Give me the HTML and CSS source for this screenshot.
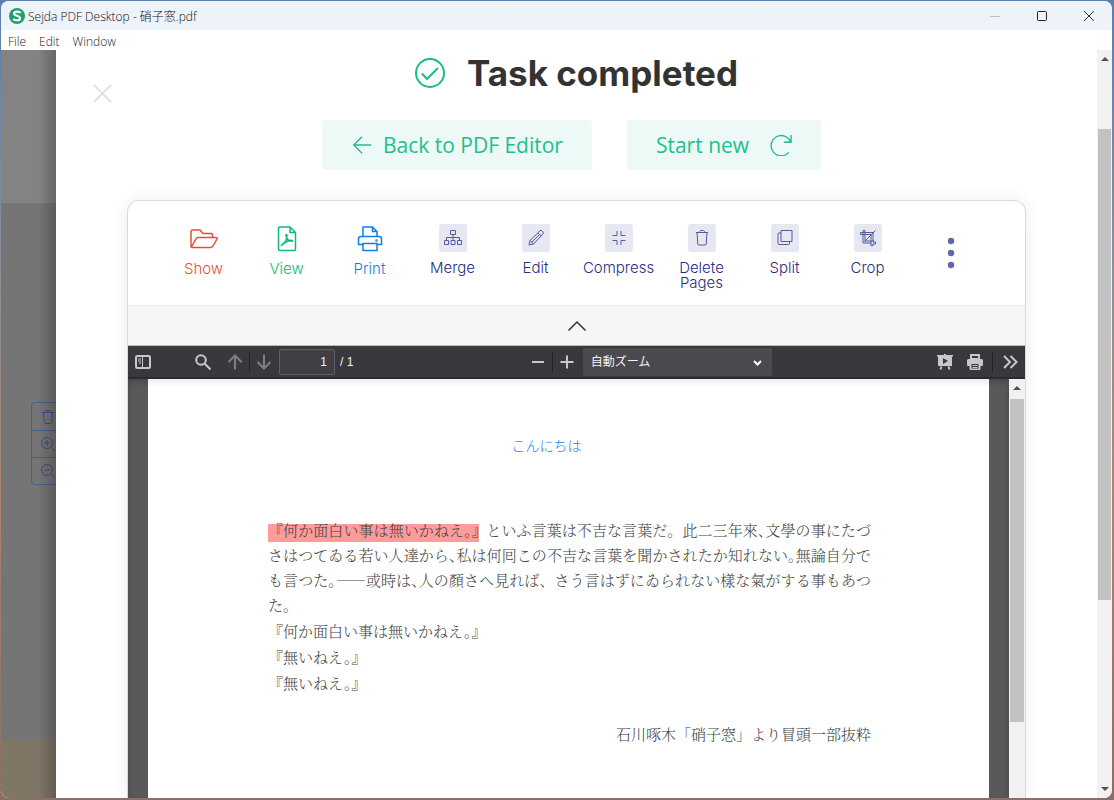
FILE: index.html
```html
<!DOCTYPE html>
<html lang="ja">
<head>
<meta charset="utf-8">
<title>Sejda PDF Desktop</title>
<link rel="stylesheet" href="styles.css">
</head>
<body>
<div class="window">
  <header class="titlebar">
    <svg class="logo" viewBox="0 0 16 16"><circle cx="8" cy="8" r="8" fill="#22a06b"/><path d="M11.500 5C10.500 3.300 5.500 3 5 5.400 4.700 7.900 11.300 7.500 11.100 10.300 10.900 13 5.400 12.700 4.400 10.700" fill="none" stroke="#fff" stroke-width="2.200"/></svg>
    <span class="caption">Sejda PDF Desktop - 硝子窓.pdf</span>
    <div class="controls">
      <button aria-label="Minimize"><svg viewBox="0 0 12 12"><path d="M1 6.500h10" stroke="#bfc2c5"/></svg></button>
      <button aria-label="Maximize"><svg viewBox="0 0 12 12"><rect x="1.500" y="1.500" width="9" height="9" rx="1" stroke="#222"/></svg></button>
      <button aria-label="Close window"><svg viewBox="0 0 12 12"><path d="M1 1l10 10M11 1L1 11" stroke="#333"/></svg></button>
    </div>
  </header>
  <nav class="menubar"><button>File</button><button>Edit</button><button>Window</button></nav>
  <div class="body">
    <aside class="backdrop">
      <div class="band band-top"></div>
      <div class="band band-mid"></div>
      <div class="band band-low"></div>
      <div class="page-tools">
        <button aria-label="Delete page"><svg viewBox="0 0 16 16"><path d="M2 3.500h12M5 3.500v-1l1-1h4l1 1v1M3.500 4l.8 9.500 1 1h5.400l1-1 .8-9.500"/></svg></button>
        <button aria-label="Zoom in page"><svg viewBox="0 0 16 16"><circle cx="7" cy="7" r="5.500"/><path d="M11 11l4 4M4 7h6M7 4v6"/></svg></button>
        <button aria-label="Zoom out page"><svg viewBox="0 0 16 16"><circle cx="7" cy="7" r="5.500"/><path d="M11 11l4 4M4 7h6"/></svg></button>
      </div>
    </aside>
    <main class="dialog">
      <button class="dismiss" aria-label="Close"><svg viewBox="0 0 20 20"><path d="M1 1l18 18M19 1L1 19"/></svg></button>
      <h1 class="heading">
        <svg viewBox="0 0 30 30"><circle cx="15" cy="15" r="14"/><path d="M7 15.500l5 5.500L23 10"/></svg>
        Task completed
      </h1>
      <div class="actions">
        <button class="action"><svg viewBox="0 0 24 24"><path d="M22 12H3M12 3l-9 9 9 9"/></svg>Back to PDF Editor</button>
        <button class="action restart">Start new<svg viewBox="0 0 24 24"><path d="M23 1v8h-8M22.500 8.800A11 11 0 1 0 20.500 20"/></svg></button>
      </div>
      <section class="card">
        <div class="tools">
          <button class="tool red"><svg class="big" viewBox="0 0 28 28"><path d="M1 22.500V6.500q0-1.500 1.500-1.500h7.500l3 3.500h8q1.500 0 1.500 1.500v2.500M1 22.500L6 13.800q.7-1.300 2-1.300h18q1.800 0 1 1.500l-4 7q-.8 1.500-2.500 1.500H2.500q-1.500 0-1.500-1.500"/></svg>Show</button>
          <button class="tool green"><svg class="big" viewBox="0 0 28 28"><path d="M7 2h10l5.500 5.500v16.500q0 1.500-1.500 1.500H7q-1.500 0-1.500-1.500V3.500q0-1.500 1.500-1.500zM17 2v5.500h5.500M9 20c3-1 5-6 5-9.500 0-1.500-1.500-1.500-1 0 .8 4 3.500 6 6.500 5.500 0-1.800-8 .5-10.500 4z"/></svg>View</button>
          <button class="tool blue"><svg class="big" viewBox="0 0 28 28"><path d="M7 11.500V2h9.500l4.500 4.500v5M16.500 2v4.500h4.500M7 19.500H2.500V14q0-2.500 2.500-2.500h18q2.500 0 2.500 2.500v5.500H21M7 18.500h14V25.500H7z"/><circle cx="20.500" cy="15.500" r=".5"/></svg>Print</button>
          <button class="tool"><span class="chip"><svg viewBox="0 0 20 20"><path d="M7.500 2.500h5v4h-5zM10 6.500v6M3.500 12.500V9.500h13v3M1.500 12.500h4v4h-4zM8 12.500h4v4H8zM14.500 12.500h4v4h-4z"/></svg></span>Merge</button>
          <button class="tool"><span class="chip"><svg viewBox="0 0 20 20"><path d="M3 17l1-4.500L14 2.800q1-.8 2 .1l1 1q.9 1 0 2L7.500 16zM4 12.500L7.500 16M12 5l3 3M5.500 14.500L14 6"/></svg></span>Edit</button>
          <button class="tool"><span class="chip"><svg viewBox="0 0 20 20"><path d="M8 3v4.500H3.500M12 3v4.500h4.500M8 17v-4.500H3.500M12 17v-4.500h4.500"/></svg></span>Compress</button>
          <button class="tool"><span class="chip"><svg viewBox="0 0 20 20"><path d="M4 4.500h12M7.500 4.500v-1l1-1h3l1 1v1M5 4.500l.8 11.500q.2 1 1.200 1h6q1 0 1.200-1L15 4.500"/></svg></span>Delete Pages</button>
          <button class="tool"><span class="chip"><svg viewBox="0 0 20 20"><path d="M6 2.500h11v11H6zM6 5H4q-1 0-1 1v9.500q0 1 1 1h9.500q1 0 1-1v-2"/></svg></span>Split</button>
          <button class="tool"><span class="chip"><svg viewBox="0 0 20 20"><path d="M2.500 4.500h12.500v9.500h2.500v2h-2.500v1.500h-2V6.500H2.500zM5 2.500h2v10.500h9M5 2.500v12.500h8M6.500 13.500L17.500 2.500"/></svg></span>Crop</button>
          <button class="tool more" aria-label="More tools"><svg viewBox="0 0 8 32"><circle cx="4" cy="4" r="3.200"/><circle cx="4" cy="16" r="3.200"/><circle cx="4" cy="28" r="3.200"/></svg></button>
        </div>
        <button class="collapse" aria-label="Collapse tools"><svg viewBox="0 0 20 12"><path d="M1.500 10.500L10 2l8.500 8.500"/></svg></button>
        <div class="toolbar">
          <div class="group">
            <button class="tb sidebar" aria-label="Toggle sidebar"><svg viewBox="0 0 16 16"><rect x="1" y="2" width="14" height="12" rx="1.500" class="line"/><path d="M7.500 2v12M3 5h3M3 7h3M4 9h2" class="line thin"/></svg></button>
            <button class="tb" aria-label="Find"><svg viewBox="0 0 16 16"><circle cx="6" cy="6" r="4.800" class="line"/><path d="M9.800 9.800L15.500 15.500" class="line"/></svg></button>
            <button class="tb dim up" aria-label="Previous page"><svg viewBox="0 0 16 16"><path d="M8 15.500V1.500M1.500 8L8 1.500 14.500 8" class="line"/></svg></button>
            <span class="sep"></span>
            <button class="tb dim" aria-label="Next page"><svg viewBox="0 0 16 16"><path d="M8 .5v14M1.500 8L8 14.500 14.500 8" class="line"/></svg></button>
            <input class="page-no" type="text" value="1" aria-label="Page"><span class="total">/ 1</span>
          </div>
          <div class="group">
            <button class="tb" aria-label="Zoom out"><svg viewBox="0 0 16 16"><path d="M2 8h12" class="line"/></svg></button>
            <span class="sep"></span>
            <button class="tb" aria-label="Zoom in"><svg viewBox="0 0 16 16"><path d="M1.500 8h13M8 1.500v13" class="line"/></svg></button>
            <div class="zoom">
              <select aria-label="Zoom"><option>自動ズーム</option></select>
              <svg viewBox="0 0 10 8"><path d="M1.500 2L5 5.500 8.500 2"/></svg>
            </div>
          </div>
          <div class="group end">
            <button class="tb" aria-label="Presentation mode"><svg viewBox="0 0 16 16"><path fill-rule="evenodd" d="M0 1h7V0h2v1h7v1.500h-1V12H1V2.500H0zM6 4v6l5-3z"/><path d="M4.500 12.500l-1 3M11.500 12.500l1 3" class="line"/></svg></button>
            <button class="tb" aria-label="Print document"><svg viewBox="0 0 16 16"><path d="M4 1h8v4H4z" class="line"/><path fill-rule="evenodd" d="M1.500 5h13Q16 5 16 6.500V11q0 1-1 1h-1.500v2.500q0 1.500-1.500 1.500H4q-1.500 0-1.500-1.500V12H1q-1 0-1-1V6.500Q0 5 1.500 5zM4.500 10v4.500h7V10z"/><path d="M5.500 11.500h5M5.500 13.500h5" class="line thin"/></svg></button>
            <span class="sep"></span>
            <button class="tb" aria-label="Tools"><svg viewBox="0 0 16 16"><path d="M2 2l6 6-6 6M8.500 2l6 6-6 6" class="line"/></svg></button>
          </div>
        </div>
        <div class="viewer">
          <div class="desk">
            <article class="sheet">
              <p class="greeting">こんにちは</p>
              <div class="prose">
                <p class="row"><mark>『何か面白い事は無いかねえ<span class="half">。』</span></mark>といふ言葉は不吉な言葉だ。此二三年來<span class="half">、</span>文學の事にたづ</p>
                <p class="row">さはつてゐる若い人達から<span class="half">、</span>私は何囘この不吉な言葉を聞かされたか知れない<span class="half">。</span>無論自分で</p>
                <p class="row">も言つた<span class="half">。</span>――或時は<span class="half">、</span>人の顏さへ見れば、さう言はずにゐられない樣な氣がする事もあつ</p>
                <p>た。</p>
                <p class="quote">『何か面白い事は無いかねえ。』</p>
                <p class="quote">『無いねえ。』</p>
                <p class="quote">『無いねえ。』</p>
              </div>
              <p class="source">石川啄木「硝子窓」より冒頭一部抜粋</p>
            </article>
          </div>
          <div class="scroll inner"><svg viewBox="0 0 8 4"><path d="M0 4l4-4 4 4z"/></svg><div class="thumb"></div></div>
        </div>
      </section>
    </main>
    <div class="scroll outer"><svg viewBox="0 0 8 4"><path d="M0 4l4-4 4 4z"/></svg><div class="thumb"></div><svg class="down" viewBox="0 0 8 4"><path d="M0 0l4 4 4-4z"/></svg></div>
  </div>
</div>
</body>
</html>
```
FILE: styles.css
```css
* { box-sizing: border-box; }
body {
  margin: 0;
  padding: 1px 2px 2px 1px;
  height: 100vh;
  overflow: hidden;
  background: linear-gradient(#5b7fae, #8c9098 35%, #a88672 60%, #8b6f66);
  font-family: "Open Sans", "Noto Sans CJK JP", sans-serif;
}
button { margin: 0; padding: 0; border: 0; background: none; font: inherit; color: inherit; }
svg { display: block; fill: none; }
p { margin: 0; }
.window { display: flex; flex-direction: column; height: 100%; border-radius: 8px; overflow: hidden; background: #fff; }

.titlebar { display: flex; align-items: center; height: 29px; flex: none; padding-left: 8px; background: #edf3f8; color: #111; font: 300 12px "Open Sans", "Noto Sans CJK JP", sans-serif; }
.logo { width: 16px; height: 16px; margin-right: 3px; }
.controls { display: flex; margin-left: auto; }
.controls button { display: grid; place-items: center; width: 47px; height: 29px; }
.controls svg { width: 12px; height: 12px; }
.menubar { display: flex; flex: none; gap: 13px; height: 20px; padding: 2px 7px 0; align-items: center; color: #222; font-weight: 300; font-size: 12px; }

.body { display: flex; flex: 1; min-height: 0; }
.backdrop { position: relative; display: flex; flex-direction: column; flex: none; width: 55px; overflow: hidden; }
.backdrop::after { content: ""; position: absolute; inset: 0 0 0 auto; width: 18px; background: linear-gradient(90deg, transparent, rgba(0, 0, 0, 0.22)); }
.band-top { flex: 153; background: #838383; }
.band-mid { flex: 537; background: #757575; }
.band-low { flex: 58; background: #7f7666; }
.page-tools { position: absolute; left: 30px; top: 352px; width: 34px; border: 1px solid #435f91; border-radius: 4px; }
.page-tools button { display: block; width: 100%; height: 27px; padding-left: 8px; }
.page-tools button + button { border-top: 1px solid #435f91; }
.page-tools svg { width: 16px; height: 16px; stroke: #3c5280; }

.dialog { position: relative; display: flex; flex-direction: column; align-items: center; flex: 1; min-width: 0; padding: 0 24px; background: #fff; overflow: hidden; }
.dismiss { position: absolute; left: 37px; top: 34px; }
.dismiss svg { width: 19px; height: 19px; stroke: #dedede; stroke-width: 2; }
.heading { display: flex; align-items: center; gap: 22px; flex: none; height: 46px; margin: 0; color: #333; font: 700 35px/46px Inter, sans-serif; }
.heading svg { width: 30px; height: 30px; stroke: #1abc85; stroke-width: 2; }
.actions { display: flex; flex: none; gap: 35px; margin-top: 24px; padding-right: 10px; }
.action { display: flex; align-items: center; gap: 10px; height: 50px; padding: 0 29px; border-radius: 4px; background: #edf9f7; color: #1fbf8a; font-size: 21px; }
.action svg { width: 22px; height: 22px; stroke: currentColor; stroke-width: 1.5; }
.restart { gap: 21px; }

.card { display: flex; flex-direction: column; flex: 1; min-height: 0; width: 100%; max-width: 899px; margin-top: 30px; border: 1px solid #d9d9d9; border-bottom: 0; border-radius: 12px 12px 0 0; box-shadow: 0 0 18px rgba(0, 0, 0, 0.08); overflow: hidden; }
.tools { display: grid; grid-template-columns: repeat(10, 1fr); flex: none; height: 104px; padding: 23px 33px 0 34px; }
.tool { display: flex; flex-direction: column; align-items: center; gap: 8px; color: #272d82; font: 300 15px/15px Inter, sans-serif; }
.big { width: 28px; height: 28px; stroke: currentColor; stroke-width: 1.5; margin-top: 1px; }
.chip { display: grid; place-items: center; width: 28px; height: 28px; border-radius: 3px; background: #e6e7f0; }
.chip svg { width: 20px; height: 20px; stroke: #545a9e; }
.red { color: #ee4b36; }
.green { color: #10b878; }
.blue { color: #0f7fe6; }
.more { padding-top: 13px; }
.more svg { width: 8px; height: 32px; fill: #6166a6; }
.collapse { display: grid; place-items: center; flex: none; height: 41px; background: #f5f6f6; border-top: 1px solid #eee; border-bottom: 1px solid #bbb; }
.collapse svg { width: 20px; height: 12px; stroke: #333; stroke-width: 1.5; }

.toolbar { display: flex; align-items: center; justify-content: space-between; flex: none; height: 33px; padding: 0 1px; background: #38383d; border-bottom: 2px solid #2a2a30; color: #f4f4f6; font: 12px "Liberation Sans", "Noto Sans CJK JP", sans-serif; }
.group { display: flex; align-items: center; }
.group:first-child { padding-right: 11px; }
.tb { display: grid; place-items: center; width: 28px; height: 28px; }
.tb svg { width: 16px; height: 16px; fill: #c8c8ca; }
.tb .line { fill: none; stroke: #c8c8ca; stroke-width: 2; }
.tb .thin { stroke-width: 1; }
.sidebar { margin-right: 32px; }
.dim { opacity: 0.5; }
.up { margin-left: 4px; }
.sep { width: 1px; height: 20px; background: #242428; }
.page-no { width: 56px; height: 26px; margin: 0 5px 0 1px; padding: 0 7px; border: 1px solid #606064; border-radius: 2px; background: #404044; color: inherit; font: inherit; text-align: right; }
.zoom { position: relative; width: 189px; margin-left: 2px; }
.zoom select { display: block; width: 100%; height: 28px; padding: 0 8px; border: 0; border-radius: 2px; appearance: none; background: #4a4a4f; color: inherit; font: inherit; }
.zoom svg { position: absolute; right: 9px; top: 11px; width: 11px; height: 8px; stroke: #fff; stroke-width: 2; pointer-events: none; }
.end .sep { margin: 0 3px; }
.end .tb + .tb { margin-left: 2px; }

.viewer { display: flex; flex: 1; min-height: 0; }
.desk { flex: 1; min-width: 0; padding: 0 20px; background: #595959; box-shadow: inset 0 3px 6px rgba(0, 0, 0, 0.2); }
.sheet { height: 100%; padding: 54px 118px 0 120px; background: linear-gradient(#ededf1, #fff 8px); color: #444; font: 300 15px/25px "Noto Serif CJK JP", "Noto Sans CJK JP", sans-serif; }
.greeting { padding-right: 46px; color: #1b82dd; font: 300 14px/25px "Noto Sans CJK JP", sans-serif; text-align: center; }
.prose { margin-top: 59px; }
.row { white-space: nowrap; text-align: justify; text-align-last: justify; }
.quote { padding-top: 1px; }
.half { font-feature-settings: "halt"; }
mark { margin-right: 7px; padding: 2px 0; background: linear-gradient(#ff9b9b, #ff9b9b) bottom / 100% 18px no-repeat; color: inherit; }
.source { margin-top: 26px; text-align: right; }

.scroll { display: flex; flex-direction: column; align-items: center; flex: none; background: #f1f1f1; }
.scroll svg { width: 8px; height: 4px; margin: 7px 0; fill: #505050; flex: none; }
.thumb { width: 100%; background: #c1c1c1; border: 0 solid #f1f1f1; border-width: 0 1px; }
.inner { width: 16px; }
.inner .thumb { height: 77%; margin-top: 2px; }
.outer { width: 15px; }
.outer .thumb { height: 63%; margin-top: 61px; }
.outer .down { margin-top: auto; }
```
